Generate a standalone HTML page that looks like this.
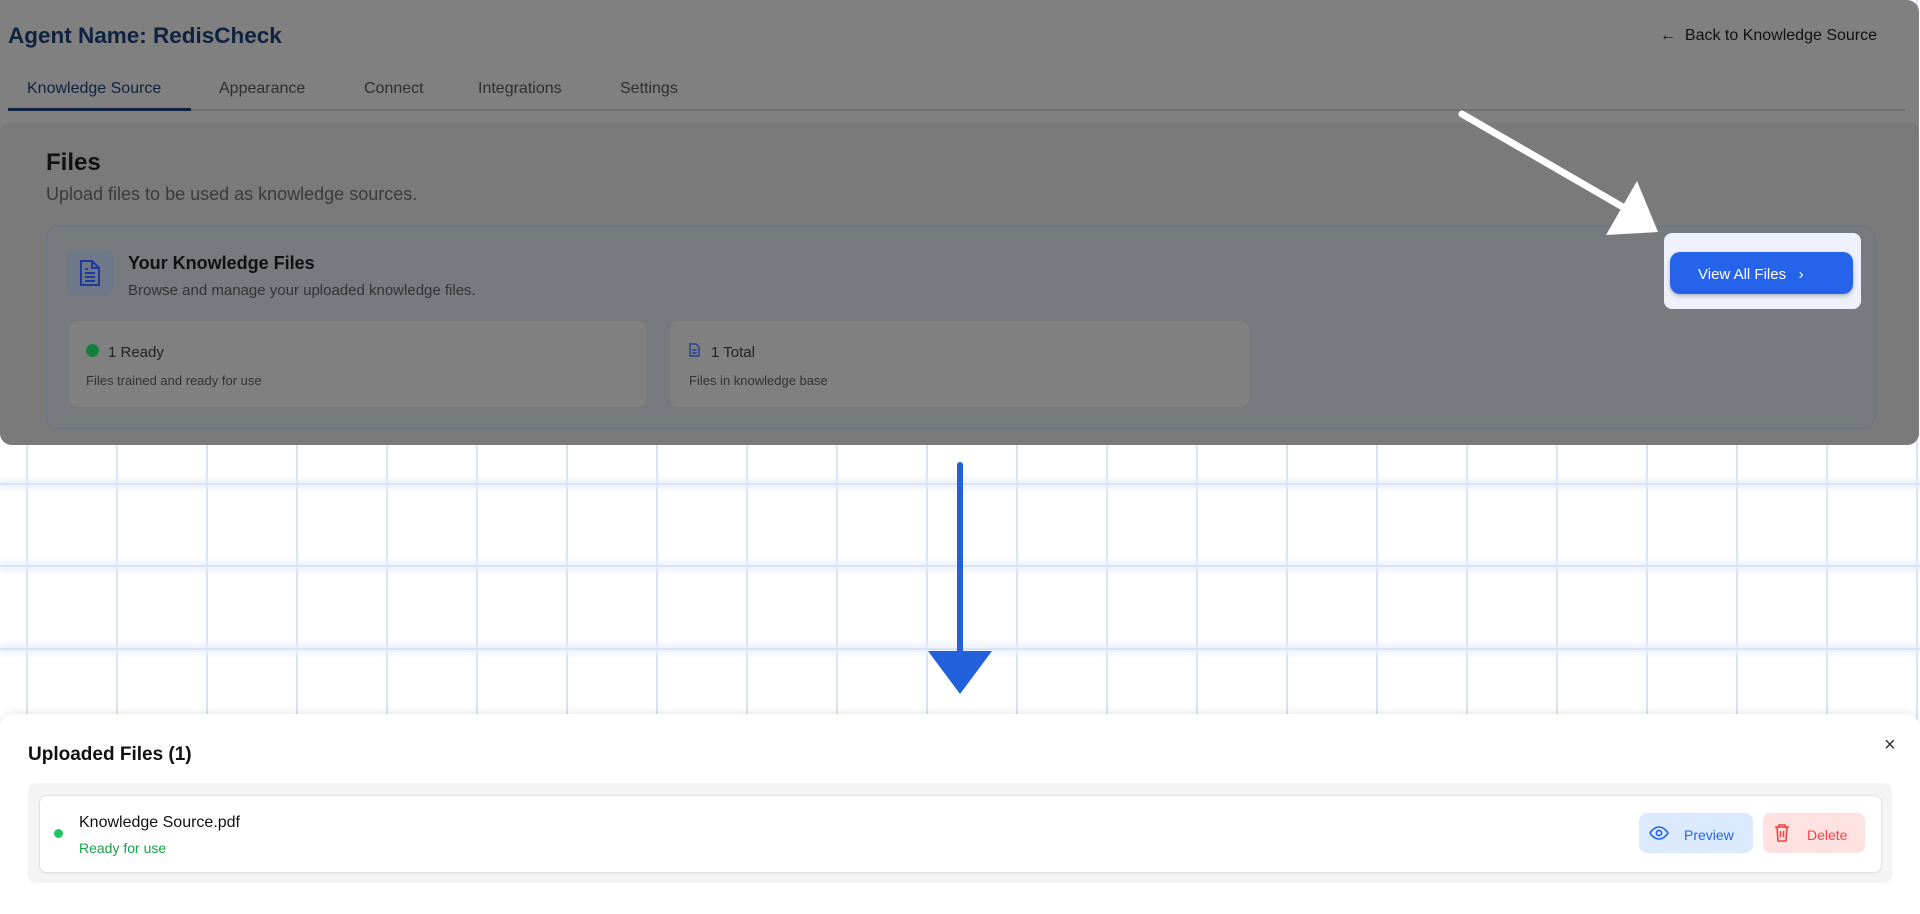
<!DOCTYPE html>
<html><head><meta charset="utf-8"><style>
*{box-sizing:border-box;margin:0;padding:0}
body{width:1920px;height:912px;overflow:hidden;position:relative;font-family:"Liberation Sans",sans-serif;background:#fff}
.abs{position:absolute}
.grid{position:absolute;left:0;top:0;width:1920px;height:912px;
background-image:linear-gradient(90deg,#d9e2f6 2px,transparent 2px);
background-size:90px 100%;background-position:26px 0}
.hl{position:absolute;left:0;width:1920px;height:2px;background:#d9e2f7;box-shadow:0 0 8px 3px #e8eefb}
.top{left:0;top:0;width:1919px;height:445px;background:#808080;border-radius:0 0 12px 12px}
.txt{position:absolute;white-space:nowrap;transform:translateY(3px)}
</style></head><body>
<div class="grid"></div>
<div class="hl" style="top:483px"></div>
<div class="hl" style="top:565px"></div>
<div class="hl" style="top:648px"></div>

<div class="abs top" style="border-radius:0 12px 12px 12px"></div>
<div class="txt" style="left:8px;top:20px;font-size:22.5px;font-weight:bold;color:#0f2240">Agent Name: RedisCheck</div>
<div class="txt" style="left:1660px;top:24px;font-size:16px;color:#111">&#8592;&nbsp; Back to Knowledge Source</div>
<div class="txt" style="left:27px;top:77px;font-size:16px;color:#0f2240">Knowledge Source</div>
<div class="txt" style="left:219px;top:77px;font-size:16px;color:#2f2f2f">Appearance</div>
<div class="txt" style="left:364px;top:77px;font-size:16px;color:#2f2f2f">Connect</div>
<div class="txt" style="left:478px;top:77px;font-size:16px;color:#2f2f2f">Integrations</div>
<div class="txt" style="left:620px;top:77px;font-size:16px;color:#2f2f2f">Settings</div>
<div class="abs" style="left:8px;top:109px;width:1897px;height:2px;background:#727272"></div>
<div class="abs" style="left:8px;top:108px;width:183px;height:3px;background:#0f2240"></div>

<div class="abs" style="left:0;top:122px;width:1919px;height:323px;background:#7a7a7a;border-radius:10px 10px 12px 12px"></div>
<div class="txt" style="left:46px;top:146px;font-size:24px;font-weight:bold;color:#111">Files</div>
<div class="txt" style="left:46px;top:181px;font-size:18px;color:#3b3b3b">Upload files to be used as knowledge sources.</div>

<div class="abs" style="left:46px;top:226px;width:1829px;height:203px;background:#777b80;border:1px solid #6d7686;border-radius:12px"></div>
<div class="abs" style="left:67px;top:250px;width:46px;height:46px;background:#6e7888;border-radius:8px"></div>
<svg class="abs" style="left:78px;top:259px" width="24" height="28" viewBox="0 0 24 28" fill="none" stroke="#1e3a9a" stroke-width="2"><path d="M3 2h11l7 7v17H3z"/><path d="M14 2v7h7"/><path d="M7 14h10M7 18h10M7 22h10M7 10h3"/></svg>
<div class="txt" style="left:128px;top:250px;font-size:18px;font-weight:bold;color:#111">Your Knowledge Files</div>
<div class="txt" style="left:128px;top:279px;font-size:15px;color:#333">Browse and manage your uploaded knowledge files.</div>

<div class="abs" style="left:67px;top:320px;width:581px;height:88px;background:#808080;border:1px solid #787878;border-radius:10px"></div>
<div class="abs" style="left:86px;top:344px;width:13px;height:13px;border-radius:50%;background:#15803d"></div>
<div class="txt" style="left:108px;top:341px;font-size:15px;color:#222">1 Ready</div>
<div class="txt" style="left:86px;top:370px;font-size:13px;color:#333">Files trained and ready for use</div>
<div class="abs" style="left:669px;top:320px;width:581px;height:88px;background:#808080;border:1px solid #787878;border-radius:10px"></div>
<svg class="abs" style="left:689px;top:343px" width="11" height="14" viewBox="0 0 11 14" fill="none" stroke="#23408e" stroke-width="1.4"><path d="M1 1h6l3 3v9H1z"/><path d="M3 7h5M3 10h5"/></svg>
<div class="txt" style="left:711px;top:341px;font-size:15px;color:#222">1 Total</div>
<div class="txt" style="left:689px;top:370px;font-size:13px;color:#333">Files in knowledge base</div>

<div class="abs" style="left:1664px;top:233px;width:197px;height:76px;background:#eef0fb;border-radius:8px"></div>
<div class="abs" style="left:1670px;top:252px;width:183px;height:42px;background:#2563eb;border-radius:10px;box-shadow:0 2px 4px rgba(0,0,0,.25)"></div>
<div class="txt" style="left:1698px;top:263px;font-size:15px;color:#fff">View All Files &nbsp;&nbsp;&#8250;</div>

<svg class="abs" style="left:0;top:0" width="1920" height="912">
<line x1="1462" y1="114" x2="1628" y2="210" stroke="#fff" stroke-width="7" stroke-linecap="round"/>
<polygon points="1606,235 1658,232 1637,181" fill="#fff"/>
<line x1="960" y1="465" x2="960" y2="655" stroke="#2360dc" stroke-width="6" stroke-linecap="round"/>
<polygon points="928,651 992,651 960,694" fill="#2360dc"/>
</svg>

<div class="abs" style="left:0;top:714px;width:1920px;height:200px;background:#fff;border-radius:14px 14px 0 0;box-shadow:0 -2px 8px rgba(0,0,0,.08)"></div>
<div class="txt" style="left:28px;top:741px;font-size:19px;font-weight:bold;color:#111">Uploaded Files (1)</div>
<div class="txt" style="left:1884px;top:731px;font-size:20px;color:#333">&#215;</div>
<div class="abs" style="left:28px;top:783px;width:1864px;height:100px;background:#f4f4f5;border-radius:8px"></div>
<div class="abs" style="left:39px;top:795px;width:1843px;height:78px;background:#fff;border:1px solid #e3e3e3;border-radius:8px;box-shadow:0 1px 2px rgba(0,0,0,.05)"></div>
<div class="abs" style="left:54px;top:829px;width:9px;height:9px;border-radius:50%;background:#22c55e"></div>
<div class="txt" style="left:79px;top:811px;font-size:16px;color:#111">Knowledge Source.pdf</div>
<div class="txt" style="left:79px;top:837px;font-size:14px;color:#16a34a">Ready for use</div>
<div class="abs" style="left:1639px;top:813px;width:114px;height:40px;background:#dbeafe;border-radius:8px"></div>
<svg class="abs" style="left:1649px;top:824px" width="20" height="18" viewBox="0 0 20 18" fill="none" stroke="#2563eb" stroke-width="1.6"><path d="M1 9s3.5-6 9-6 9 6 9 6-3.5 6-9 6-9-6-9-6z"/><circle cx="10" cy="9" r="2.6"/></svg>
<div class="txt" style="left:1684px;top:824px;font-size:14px;color:#2563eb">Preview</div>
<div class="abs" style="left:1763px;top:813px;width:102px;height:40px;background:#fee2e2;border-radius:8px"></div>
<svg class="abs" style="left:1774px;top:823px" width="16" height="19" viewBox="0 0 16 19" fill="none" stroke="#ef4444" stroke-width="1.6"><path d="M1 4h14M5 4V2h6v2M3 4l1 14h8l1-14M6.5 8v6M9.5 8v6"/></svg>
<div class="txt" style="left:1807px;top:824px;font-size:14px;color:#ef4444">Delete</div>
</body></html>
